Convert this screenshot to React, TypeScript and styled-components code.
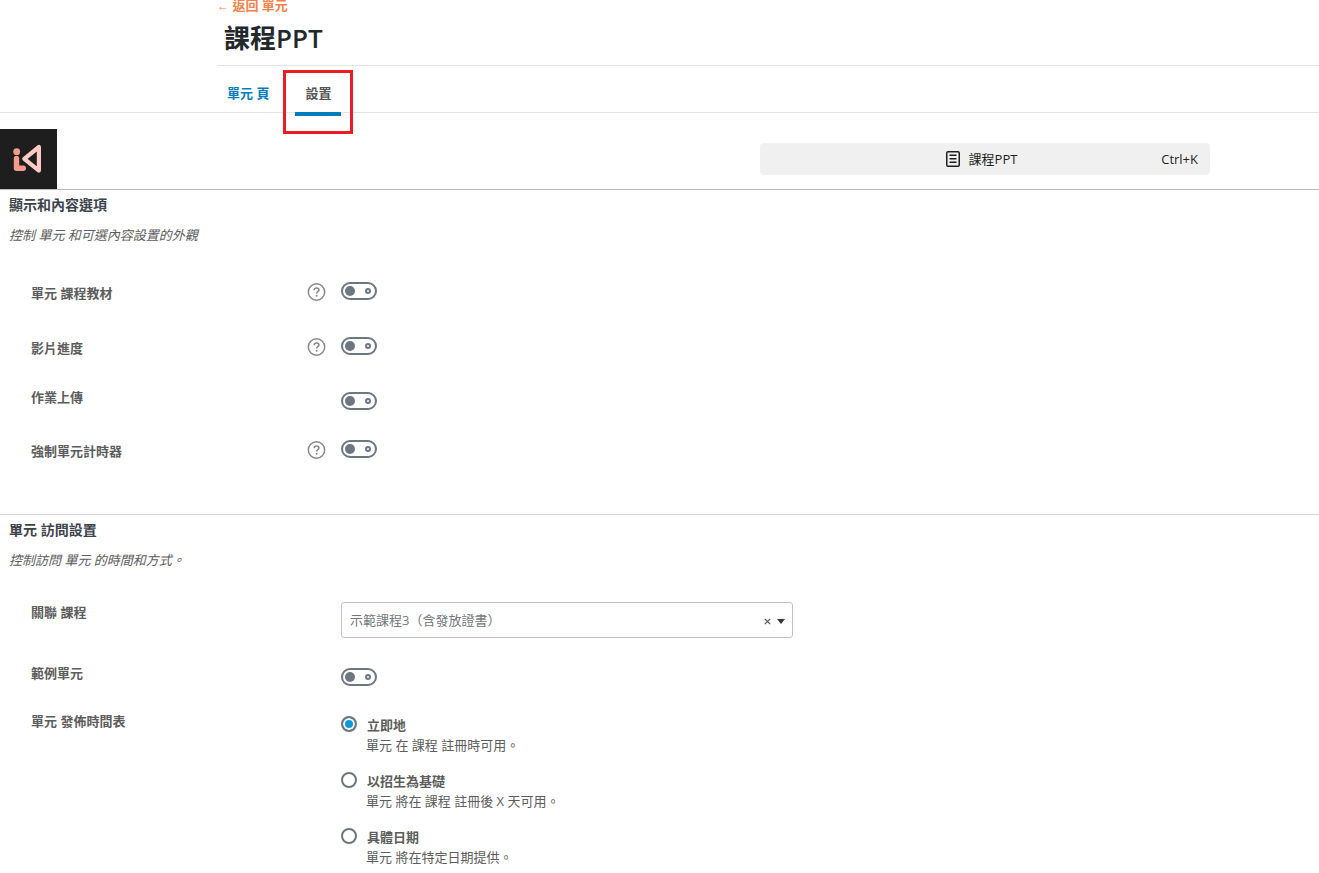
import React, { useState } from "react";
import styled, { createGlobalStyle } from "styled-components";

const GlobalStyle = createGlobalStyle`
  *, *::before, *::after { box-sizing: border-box; }
  body {
    margin: 0;
    background: #fff;
    color: #5c5c5c;
    font-family: "Open Sans", "Noto Sans CJK TC", sans-serif;
    font-size: 13px;
    line-height: 20px;
  }
  button, input, select { font: inherit; margin: 0; }
`;

const Header = styled.header`
  display: flex;
  flex-direction: column;
  align-items: flex-start;
  margin-left: 217px;
  border-bottom: 1px solid #e2e4e7;
`;

const BackLink = styled.a`
  color: #f5824a;
  font-weight: 600;
  line-height: 10px;
  text-decoration: none;
`;

const BackArrow = styled.span`
  font-family: "Liberation Sans", sans-serif;
  font-size: 12px;
  line-height: 0;
`;

const Title = styled.h1`
  margin: 10px 0 9px 7px;
  color: #23282d;
  font-size: 26px;
  font-weight: 600;
  line-height: 36px;
`;

const Tabs = styled.nav`
  display: flex;
  gap: 16px;
  padding-left: 217px;
  border-bottom: 1px solid #e2e4e7;
`;

const Tab = styled.a<{ $active?: boolean }>`
  position: relative;
  padding: 17px 10px 9px;
  color: ${(p) => (p.$active ? "#555" : "#007cba")};
  font-weight: ${(p) => (p.$active ? 600 : 700)};
  text-decoration: none;

  &::after {
    content: "";
    display: ${(p) => (p.$active ? "block" : "none")};
    position: absolute;
    left: 0;
    right: 0;
    bottom: -4px;
    height: 4px;
    background: #007cba;
  }
`;

const Highlight = styled.span`
  position: absolute;
  inset: 4px -12px -22px;
  border: 3px solid #ed1c24;
  pointer-events: none;
`;

const EditorBar = styled.div`
  display: flex;
  align-items: center;
  justify-content: space-between;
  margin-top: 16px;
  padding-right: 109px;
`;

const LogoLink = styled.a`
  display: flex;
  width: 57px;
  height: 60px;
  background: #1e1e1e;
`;

const CommandButton = styled.button`
  display: grid;
  grid-template-columns: 1fr auto 1fr;
  align-items: center;
  width: 450px;
  height: 32px;
  padding: 0 12px 0 0;
  border: 0;
  border-radius: 4px;
  background: #f0f0f0;
  color: #1e1e1e;
`;

const DocumentName = styled.span`
  display: flex;
  grid-column: 2;
  align-items: center;
  gap: 4px;
`;

const Shortcut = styled.span`
  justify-self: end;
`;

const Section = styled.section<{ $line: string }>`
  padding: 5px 9px 24px;
  border-top: 1px solid ${(p) => p.$line};

  &:last-child { padding-bottom: 0; }
`;

const SectionTitle = styled.h2`
  margin: 0;
  color: #3c434a;
  font-size: 14px;
  font-weight: 700;
  line-height: 20px;
`;

const SectionNote = styled.p`
  margin: 10px 0 32px;
  font-style: italic;
`;

const Row = styled.div<{ $help?: boolean }>`
  display: grid;
  grid-template-columns: 276px 34px 1fr;
  align-items: start;
  min-height: ${(p) => (p.$help ? 55 : 48)}px;
  padding-left: 22px;
`;

const RowLabel = styled.label<{ $help?: boolean }>`
  padding-top: ${(p) => (p.$help ? 6 : 0)}px;
  font-weight: 700;
`;

const HelpButton = styled.button`
  display: flex;
  margin-top: 6px;
  padding: 0;
  border: 0;
  background: none;
  justify-self: start;
`;

const Switch = styled.input`
  appearance: none;
  display: inline-flex;
  grid-column: 3;
  align-items: center;
  justify-content: space-between;
  width: 36px;
  height: 18px;
  margin-top: 5px;
  padding: 0 4px 0 2px;
  border: 2px solid #6c7781;
  border-radius: 9px;

  &::before {
    content: "";
    width: 10px;
    height: 10px;
    border-radius: 50%;
    background: #6c7781;
  }

  &::after {
    content: "";
    width: 6px;
    height: 6px;
    border: 2px solid #6c7781;
    border-radius: 50%;
  }

  &:checked {
    flex-direction: row-reverse;
    padding: 0 2px 0 4px;
  }
`;

const SelectBox = styled.div`
  position: relative;
  grid-column: 3;
  max-width: 452px;
  margin-bottom: 25px;
`;

const CourseSelect = styled.select`
  appearance: none;
  display: block;
  width: 100%;
  height: 36px;
  padding: 0 40px 0 8px;
  border: 1px solid #c3c4c7;
  border-radius: 3px;
  background: #fff;
  color: #72777c;
`;

const SelectTools = styled.span`
  display: flex;
  position: absolute;
  top: 0;
  right: 8px;
  align-items: center;
  gap: 6px;
  height: 38px;
  pointer-events: none;
`;

const ClearButton = styled.button`
  display: flex;
  padding: 0;
  border: 0;
  background: none;
  pointer-events: auto;
`;

const Group = styled.div`
  display: grid;
  grid-column: 3;
  gap: 16px;
  padding-top: 4px;
`;

const Option = styled.label`
  display: grid;
  grid-template-columns: 25px 1fr;
`;

const Radio = styled.input`
  appearance: none;
  width: 16px;
  height: 16px;
  margin-top: 1px;
  border: 2px solid #6c7781;
  border-radius: 50%;
  background: #fff;

  &:checked {
    background: #0d99d5;
    box-shadow: inset 0 0 0 2px #fff;
  }
`;

const OptionName = styled.strong`
  padding-left: 1px;
  font-weight: 700;
`;

const OptionNote = styled.span`
  grid-column: 2;
`;

const Logo = () => (
  <svg width="57" height="60" viewBox="0 0 57 60" fill="none" aria-hidden="true">
    <circle cx="16.7" cy="22.7" r="3.4" fill="#f8998d" />
    <path d="M16.5 29.5v9.7h6.8" stroke="#f8998d" strokeWidth="5.4" strokeLinecap="round" strokeLinejoin="round" />
    <path d="M24.3 29.8 38.9 18v23.6Z" stroke="#ffcac3" strokeWidth="4.2" strokeLinejoin="round" />
  </svg>
);

const PageIcon = () => (
  <svg width="24" height="24" viewBox="0 0 24 24" fill="#1e1e1e" aria-hidden="true">
    <path d="M15.5 7.5h-7V9h7V7.5Zm-7 3.5h7v1.5h-7V11Zm7 3.5h-7V16h7v-1.5Z" />
    <path
      fillRule="evenodd"
      d="M17 4H7a2 2 0 0 0-2 2v12a2 2 0 0 0 2 2h10a2 2 0 0 0 2-2V6a2 2 0 0 0-2-2ZM7 5.5h10a.5.5 0 0 1 .5.5v12a.5.5 0 0 1-.5.5H7a.5.5 0 0 1-.5-.5V6a.5.5 0 0 1 .5-.5Z"
    />
  </svg>
);

const HelpIcon = () => (
  <svg width="19" height="18" viewBox="0 0 19 18" fill="none" stroke="#888" aria-hidden="true">
    <circle cx="9.5" cy="9" r="8.2" strokeWidth="1.5" />
    <path d="M7.2 7.2c0-1.4 1-2.2 2.4-2.2s2.3.8 2.3 2c0 1.7-2.3 1.7-2.3 3.5" strokeWidth="1.6" />
    <circle cx="9.6" cy="12.7" r="1" fill="#888" stroke="none" />
  </svg>
);

type SwitchRowProps = { id: string; label: string; help?: boolean };

function SwitchRow({ id, label, help }: SwitchRowProps) {
  return (
    <Row $help={help}>
      <RowLabel htmlFor={id} $help={help}>{label}</RowLabel>
      {help && (
        <HelpButton type="button" aria-label={label}>
          <HelpIcon />
        </HelpButton>
      )}
      <Switch type="checkbox" role="switch" id={id} />
    </Row>
  );
}

const schedules = [
  { id: "immediate", name: "立即地", note: "單元 在 課程 註冊時可用。" },
  { id: "enrollment", name: "以招生為基礎", note: "單元 將在 課程 註冊後 X 天可用。" },
  { id: "date", name: "具體日期", note: "單元 將在特定日期提供。" },
];

export default function App() {
  const [schedule, setSchedule] = useState("immediate");
  const [course, setCourse] = useState("demo3");

  return (
    <>
      <GlobalStyle />
      <Header>
        <BackLink href="#units">
          <BackArrow>←</BackArrow> 返回 單元
        </BackLink>
        <Title>課程PPT</Title>
      </Header>
      <Tabs>
        <Tab href="#page">單元 頁</Tab>
        <Tab href="#settings" $active aria-current="page">
          設置
          <Highlight />
        </Tab>
      </Tabs>
      <EditorBar>
        <LogoLink href="#home" aria-label="返回 單元">
          <Logo />
        </LogoLink>
        <CommandButton type="button">
          <DocumentName>
            <PageIcon />
            課程PPT
          </DocumentName>
          <Shortcut>Ctrl+K</Shortcut>
        </CommandButton>
      </EditorBar>
      <main>
        <Section $line="#bbb">
          <SectionTitle>顯示和內容選項</SectionTitle>
          <SectionNote>控制 單元 和可選內容設置的外觀</SectionNote>
          <SwitchRow id="materials" label="單元 課程教材" help />
          <SwitchRow id="video" label="影片進度" help />
          <SwitchRow id="upload" label="作業上傳" />
          <SwitchRow id="timer" label="強制單元計時器" help />
        </Section>
        <Section $line="#d9d9d9">
          <SectionTitle>單元 訪問設置</SectionTitle>
          <SectionNote>控制訪問 單元 的時間和方式。</SectionNote>
          <Row>
            <RowLabel htmlFor="course">關聯 課程</RowLabel>
            <SelectBox>
              <CourseSelect id="course" value={course} onChange={(e) => setCourse(e.target.value)}>
                <option value="" />
                <option value="demo3">示範課程3（含發放證書）</option>
              </CourseSelect>
              <SelectTools>
                <ClearButton type="button" aria-label="關聯 課程" onClick={() => setCourse("")}>
                  <svg width="7" height="7" viewBox="0 0 7 7" stroke="#555" strokeWidth="1.2" aria-hidden="true">
                    <path d="M.8.8l5.4 5.4M6.2.8L.8 6.2" />
                  </svg>
                </ClearButton>
                <svg width="8" height="5" viewBox="0 0 8 5" fill="#32373c" aria-hidden="true">
                  <path d="M0 0h8L4 5Z" />
                </svg>
              </SelectTools>
            </SelectBox>
          </Row>
          <SwitchRow id="sample" label="範例單元" />
          <Row role="radiogroup" aria-labelledby="schedule-label">
            <RowLabel as="span" id="schedule-label">單元 發佈時間表</RowLabel>
            <Group>
              {schedules.map((s) => (
                <Option key={s.id}>
                  <Radio
                    type="radio"
                    name="schedule"
                    checked={schedule === s.id}
                    onChange={() => setSchedule(s.id)}
                  />
                  <OptionName>{s.name}</OptionName>
                  <OptionNote>{s.note}</OptionNote>
                </Option>
              ))}
            </Group>
          </Row>
        </Section>
      </main>
    </>
  );
}
